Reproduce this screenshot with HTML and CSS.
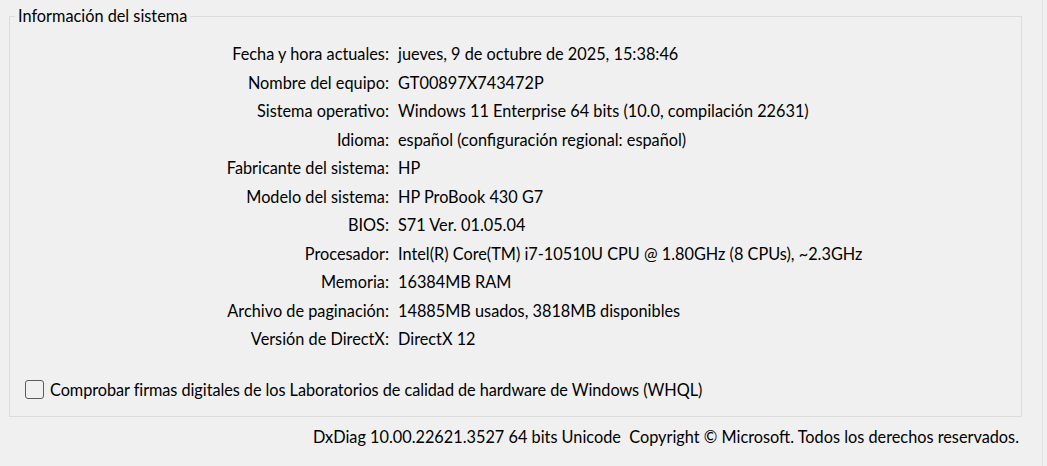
FILE: index.html
```html
<!DOCTYPE html>
<html lang="es">
<head>
<meta charset="utf-8">
<title>Información del sistema</title>
<link rel="stylesheet" href="styles.css">
</head>
<body>
<div class="page">
  <div class="main">
    <fieldset class="group">
      <legend class="group-title">Información del sistema</legend>
      <dl class="info">
        <dt>Fecha y hora actuales:</dt><dd>jueves, 9 de octubre de 2025, 15:38:46</dd>
        <dt>Nombre del equipo:</dt><dd>GT00897X743472P</dd>
        <dt>Sistema operativo:</dt><dd>Windows 11 Enterprise 64 bits (10.0, compilación 22631)</dd>
        <dt>Idioma:</dt><dd>español (configuración regional: español)</dd>
        <dt>Fabricante del sistema:</dt><dd>HP</dd>
        <dt>Modelo del sistema:</dt><dd>HP ProBook 430 G7</dd>
        <dt>BIOS:</dt><dd>S71 Ver. 01.05.04</dd>
        <dt>Procesador:</dt><dd>Intel(R) Core(TM) i7-10510U CPU @ 1.80GHz (8 CPUs), ~2.3GHz</dd>
        <dt>Memoria:</dt><dd>16384MB RAM</dd>
        <dt>Archivo de paginación:</dt><dd>14885MB usados, 3818MB disponibles</dd>
        <dt>Versión de DirectX:</dt><dd>DirectX 12</dd>
      </dl>
      <label class="check">
        <span class="box"></span>
        <span class="check-text">Comprobar firmas digitales de los Laboratorios de calidad de hardware de Windows (WHQL)</span>
      </label>
    </fieldset>
    <p class="footer">DxDiag 10.00.22621.3527 64 bits Unicode&nbsp;&nbsp;Copyright © Microsoft. Todos los derechos reservados.</p>
  </div>
  <div class="edge"></div>
</div>
</body>
</html>
```
FILE: styles.css
```css
html, body {
  margin: 0;
  padding: 0;
  background: #f0f0f0;
}
body {
  font-family: Lato, "Noto Sans", "Liberation Sans", sans-serif;
  font-size: 16.3px;
  color: #000;
  width: 1047px;
  height: 466px;
  overflow: hidden;
}
.page {
  display: flex;
  height: 466px;
}
.main {
  width: 1042px;
  display: flex;
  flex-direction: column;
}
.edge {
  width: 1px;
  background: #e2e2e2;
}
.group {
  margin: 6px 20px 0 9px;
  padding: 0;
  border: 1px solid #dcdcdc;
  height: 411px;
  box-sizing: border-box;
  min-width: 0;
}
.group-title {
  margin-left: 5px;
  padding: 0 3px;
  line-height: 20px;
}
.info {
  display: grid;
  grid-template-columns: 379px auto;
  column-gap: 9px;
  margin: 14px 0 0 0;
}
.info dt, .info dd {
  margin: 0;
  line-height: 28.5px;
  white-space: nowrap;
}
.info dt {
  text-align: right;
}
.check {
  display: flex;
  align-items: center;
  margin: 26px 0 0 15px;
  gap: 6px;
}
.box {
  width: 19px;
  height: 19px;
  border: 1px solid #5c5c5c;
  border-radius: 3px;
  background: #f0f0f0;
  box-sizing: border-box;
  flex: none;
}
.check-text {
  line-height: 20px;
  letter-spacing: -0.06px;
}
.footer {
  margin: 10px 23px 0 0;
  text-align: right;
  line-height: 20px;
}
```
